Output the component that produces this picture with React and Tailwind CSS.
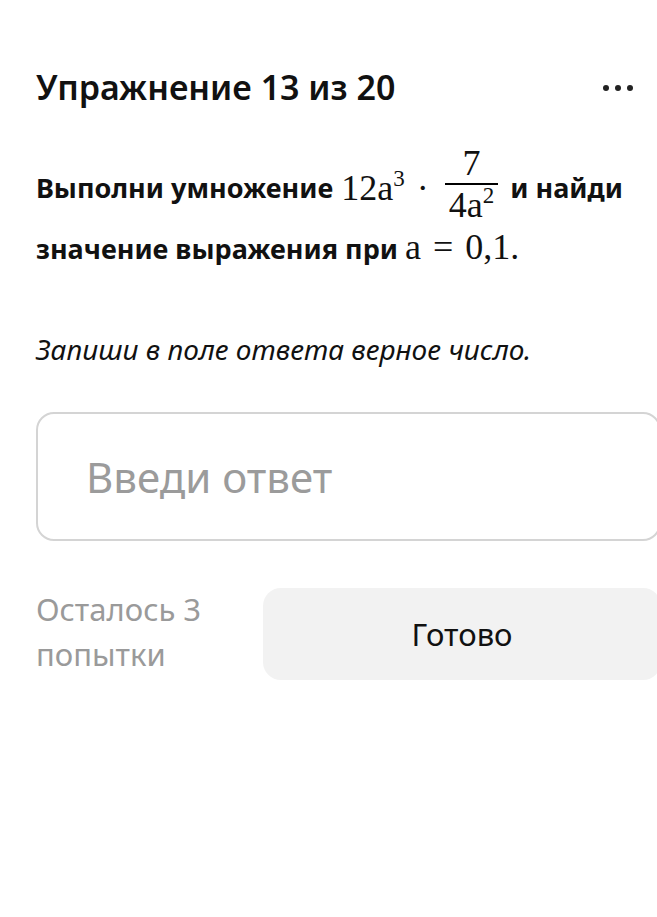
import React from 'react';

const sans = { fontFamily: '"Noto Sans", "Open Sans", sans-serif' };

const MathSerif = ({ children, className = '' }) => (
  <span className={`font-normal ${className}`} style={{ fontFamily: '"Liberation Serif", "DejaVu Serif", serif' }}>
    {children}
  </span>
);

const Fraction = () => (
  <span className="inline-flex flex-col items-center mx-1 -mt-[8px]">
    <MathSerif className="text-[36px] leading-[38px] px-1">7</MathSerif>
    <span className="block h-[2px] w-full bg-black my-[1px]" />
    <MathSerif className="text-[36px] leading-[38px] px-1">
      4a<sup className="text-[23px] -top-[14px]">2</sup>
    </MathSerif>
  </span>
);

export default function App() {
  return (
    <div className="w-full min-h-[917px] bg-white overflow-hidden" style={sans}>
      <div className="w-[625px] ml-[36px] pt-[64px]">
        {/* Header */}
        <div className="flex items-center justify-between">
          <h1 className="text-[34px] font-semibold leading-[46px] text-[#111]">Упражнение 13 из 20</h1>
          <div className="flex gap-[6px] mr-[28px] mt-[2px]">
            <span className="w-[6px] h-[6px] rounded-full bg-[#222]" />
            <span className="w-[6px] h-[6px] rounded-full bg-[#222]" />
            <span className="w-[6px] h-[6px] rounded-full bg-[#222]" />
          </div>
        </div>

        {/* Task */}
        <div className="mt-[42px] text-[27px] font-bold leading-[60px] text-[#111]">
          <div className="flex items-center">
            <span>Выполни умножение</span>
            <MathSerif className="text-[36px] ml-2">
              12a<sup className="text-[23px] -top-[14px]">3</sup>
            </MathSerif>
            <MathSerif className="text-[36px] mx-3">·</MathSerif>
            <Fraction />
            <span className="ml-2">и найди</span>
          </div>
          <div className="-mt-[7px]">
            значение выражения при{' '}
            <MathSerif className="text-[36px]">
              a<span className="mx-[12px]">=</span>0,1.
            </MathSerif>
          </div>
        </div>

        <p className="mt-[52px] text-[28px] italic text-[#111] leading-[36px]">
          Запиши в поле ответа верное число.
        </p>

        {/* Answer input */}
        <div className="mt-[45px] h-[129px] rounded-[18px] border-2 border-[#d4d4d4] flex items-center px-[48px]">
          <input
            className="w-full outline-none bg-transparent text-[42px] text-[#222] placeholder:text-[#9b9b9b]"
            placeholder="Введи ответ"
            style={sans}
          />
        </div>

        {/* Footer */}
        <div className="mt-[47px] flex items-start gap-[40px]">
          <div className="w-[187px] text-[31px] leading-[45px] text-[#9a9a9a] -mt-[1px]">
            Осталось 3 попытки
          </div>
          <button className="flex-1 h-[92px] rounded-[18px] bg-[#f2f2f2] text-[31px] text-[#111]" style={sans}>
            Готово
          </button>
        </div>
      </div>
    </div>
  );
}
